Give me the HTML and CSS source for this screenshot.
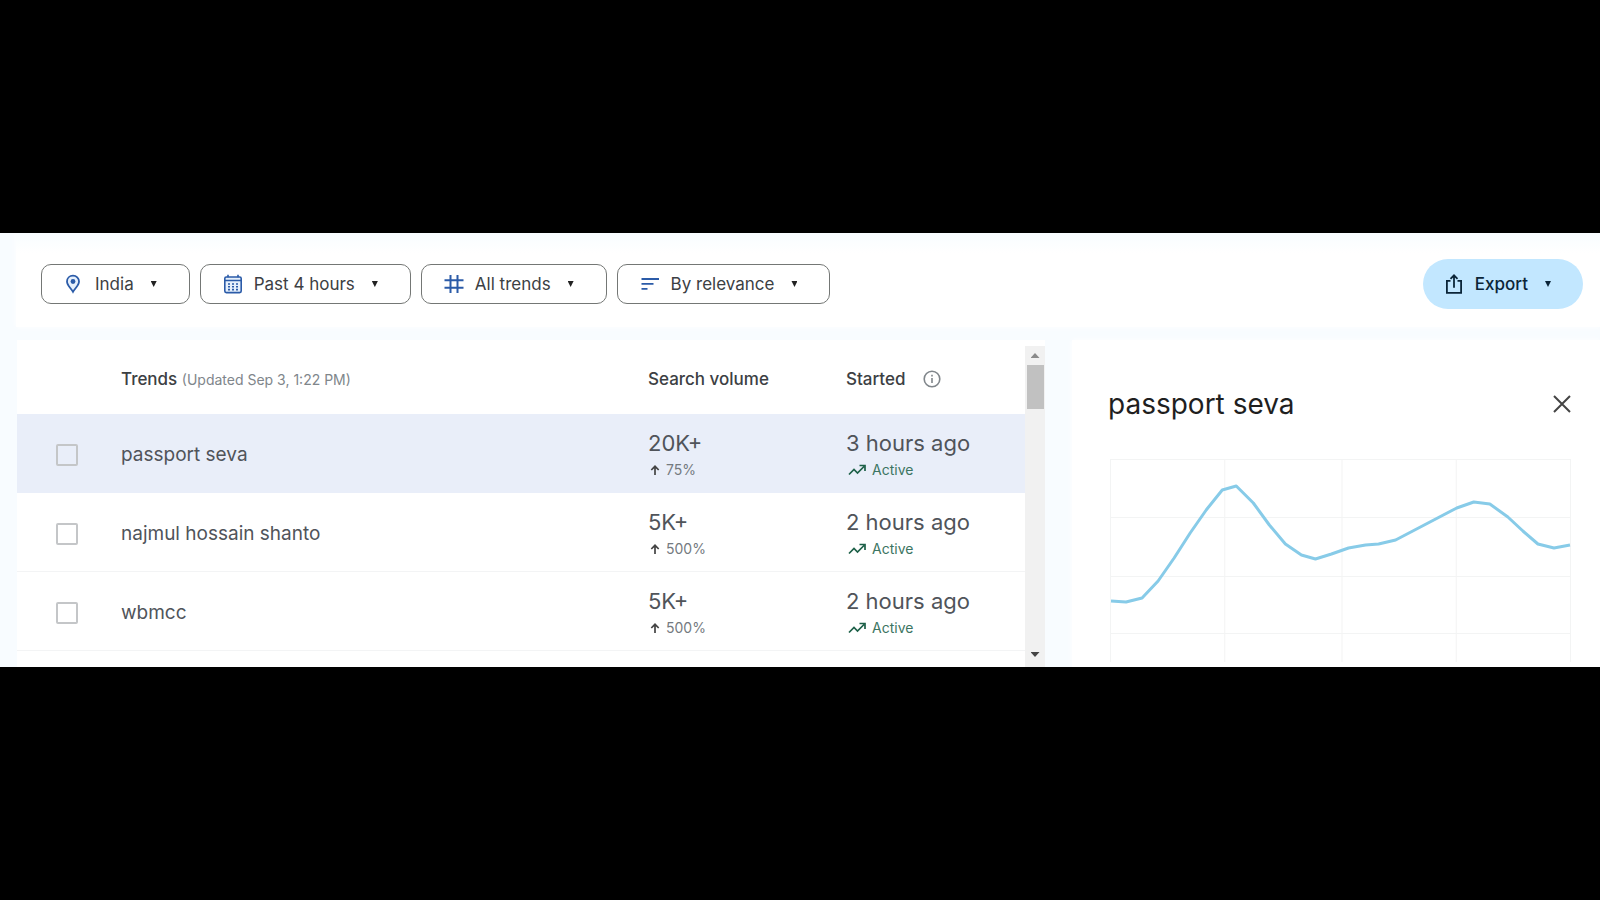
FILE: index.html
```
<!DOCTYPE html>
<html lang="en">
<head>
    <meta charset="UTF-8">
    <meta name="viewport" content="width=device-width, initial-scale=1.0">
    <title>Trending now</title>
    <link rel="stylesheet" href="styles.css">
</head>
<body>
    <main class="app">
        <header class="toolbar">
            <div class="filters">
                <button type="button" class="filter">
                    <svg class="icon" viewBox="0 0 20 20" fill="none" stroke="currentColor" stroke-width="1.8">
                        <path d="M9 1.600c-3.400 0-6 2.500-6 5.900 0 3.800 3.500 6.200 6 10.400 2.500-4.200 6-6.600 6-10.400 0-3.400-2.600-5.900-6-5.900z" fill="#e6f0fc"/>
                        <circle cx="9" cy="7.500" r="2.400" fill="currentColor" stroke="none"/>
                    </svg>
                    <span>India</span>
                    <span class="caret"></span>
                </button>
                <button type="button" class="filter">
                    <svg class="icon" viewBox="0 0 20 20" fill="none" stroke="currentColor" stroke-width="1.6">
                        <rect x="1.800" y="3" width="16.400" height="15.600" rx="1.500" fill="#e6f0fc"/>
                        <path d="M2 6.500h16M5 .8v2.500M15 .8v2.500"/>
                        <path d="M5 10h2m2 0h2m2 0h2M5 12.800h2m2 0h2m2 0h2M5 15.600h2m2 0h2m2 0h2"/>
                    </svg>
                    <span>Past 4 hours</span>
                    <span class="caret"></span>
                </button>
                <button type="button" class="filter">
                    <svg class="icon" viewBox="0 0 20 20" fill="none" stroke="currentColor" stroke-width="2">
                        <path d="M6.500 1v18M13.500 1v18M.5 6.200h19M.5 13.800h19"/>
                    </svg>
                    <span>All trends</span>
                    <span class="caret"></span>
                </button>
                <button type="button" class="filter">
                    <svg class="icon" viewBox="0 0 20 20" fill="none" stroke="currentColor" stroke-width="1.8">
                        <path d="M1.500 5h17.500M1.500 9.900h12M1.500 14.800h6"/>
                    </svg>
                    <span>By relevance</span>
                    <span class="caret"></span>
                </button>
            </div>
            <button type="button" class="export">
                <svg class="icon" viewBox="0 0 20 20" fill="none" stroke="currentColor" stroke-width="1.8">
                    <path d="M6.500 6.800H2.900v12h14.200v-12h-3.600M10 13.800V2M6.500 4.800L10 1.300l3.500 3.500"/>
                </svg>
                <span>Export</span>
                <span class="caret"></span>
            </button>
        </header>

        <div class="content">
            <section class="trends">
                <table>
                    <colgroup>
                        <col class="col-check">
                        <col class="col-name">
                        <col class="col-volume">
                        <col class="col-started">
                    </colgroup>
                    <thead>
                        <tr>
                            <th></th>
                            <th>Trends <span class="updated">(Updated Sep 3, 1:22 PM)</span></th>
                            <th>Search volume</th>
                            <th>
                                <span class="started-head">Started
                                    <svg class="info" viewBox="0 0 18 18" fill="none" stroke="currentColor" stroke-width="1.6">
                                        <circle cx="9" cy="9" r="7.800"/>
                                        <path d="M9 8v5M9 4.800v1.700"/>
                                    </svg>
                                </span>
                            </th>
                        </tr>
                    </thead>
                    <tbody>
                        <tr class="selected">
                            <td><input type="checkbox" aria-label="Select passport seva"></td>
                            <td class="name">passport seva</td>
                            <td>
                                <div class="value">20K+</div>
                                <div class="detail"><svg class="up" viewBox="0 0 10 10"><path d="M5 10V1.500M1.300 5L5 1.300 8.700 5"/></svg>75%</div>
                            </td>
                            <td>
                                <div class="value">3 hours ago</div>
                                <div class="detail active"><svg class="trend" viewBox="0 0 18 12"><path d="M1 10.500l5-5 3.500 3.500L16 2.500M11.500 1.500H17V7"/></svg>Active</div>
                            </td>
                        </tr>
                        <tr>
                            <td><input type="checkbox" aria-label="Select najmul hossain shanto"></td>
                            <td class="name">najmul hossain shanto</td>
                            <td>
                                <div class="value">5K+</div>
                                <div class="detail"><svg class="up" viewBox="0 0 10 10"><path d="M5 10V1.500M1.300 5L5 1.300 8.700 5"/></svg>500%</div>
                            </td>
                            <td>
                                <div class="value">2 hours ago</div>
                                <div class="detail active"><svg class="trend" viewBox="0 0 18 12"><path d="M1 10.500l5-5 3.500 3.500L16 2.500M11.500 1.500H17V7"/></svg>Active</div>
                            </td>
                        </tr>
                        <tr>
                            <td><input type="checkbox" aria-label="Select wbmcc"></td>
                            <td class="name">wbmcc</td>
                            <td>
                                <div class="value">5K+</div>
                                <div class="detail"><svg class="up" viewBox="0 0 10 10"><path d="M5 10V1.500M1.300 5L5 1.300 8.700 5"/></svg>500%</div>
                            </td>
                            <td>
                                <div class="value">2 hours ago</div>
                                <div class="detail active"><svg class="trend" viewBox="0 0 18 12"><path d="M1 10.500l5-5 3.500 3.500L16 2.500M11.500 1.500H17V7"/></svg>Active</div>
                            </td>
                        </tr>
                    </tbody>
                </table>
                <div class="scrollbar">
                    <span class="scroll-up"></span>
                    <span class="scroll-thumb"></span>
                    <span class="scroll-down"></span>
                </div>
            </section>

            <aside class="details">
                <div class="details-head">
                    <h2>passport seva</h2>
                    <button type="button" class="close" aria-label="Close">
                        <svg viewBox="0 0 18 18"><path d="M1 1l16 16M17 1L1 17"/></svg>
                    </button>
                </div>
                <svg class="chart" viewBox="0 0 460 208" preserveAspectRatio="none">
                    <path class="grid" d="M0 .5H460M0 58.500H460M0 117.500H460M0 174.500H460M.5 0V203M114.500 0V203M231.500 0V203M345.500 0V203M459.500 0V203"/>
                    <polyline class="line" points="1,142 16,143 32,139 48,122 64,99 80,74 96,51 112,31 126,27 143,44 159,66 175,85 191,96 205,100 221,95 238,89 255,86 268,85 285,81 346,49 363,43 379,45 397,58 412,72 427,85 443,89 459,86"/>
                </svg>
            </aside>
        </div>
    </main>
</body>
</html>
```
FILE: styles.css
```
* {
    box-sizing: border-box;
}

body {
    margin: 0;
    min-height: 100vh;
    display: flex;
    flex-direction: column;
    justify-content: center;
    background-color: #000;
    color: #3c4043;
    font-family: Inter, "Liberation Sans", sans-serif;
    font-size: 17px;
}

button {
    font: inherit;
    cursor: pointer;
}

.app {
    background-color: #f8fcff;
    overflow: hidden;
}

/* Toolbar */
.toolbar {
    display: flex;
    justify-content: space-between;
    align-items: center;
    margin: 0 0 13px 16px;
    padding: 26px 17px 18px 25px;
    background: linear-gradient(#f8fdff, #fff 20px);
    box-shadow: 0 0 6px #fff;
}

.filters {
    display: flex;
    gap: 10px;
}

.filter {
    display: flex;
    align-items: center;
    height: 40px;
    padding: 0 32px 0 22px;
    border: 1px solid #747775;
    border-radius: 10px;
    background-color: #fff;
    color: #3c4043;
}

.filter .icon {
    color: #2b5ba8;
}

.icon {
    width: 20px;
    height: 20px;
    margin-right: 11px;
}

.caret {
    width: 6px;
    height: 6px;
    margin-left: 17px;
    background-color: #222;
    clip-path: polygon(0 0, 100% 0, 50% 100%);
}

.export {
    display: flex;
    align-items: center;
    height: 50px;
    padding: 0 32px 0 21px;
    border: none;
    border-radius: 25px;
    background-color: #c2e7ff;
    color: #0b2538;
    font-weight: 500;
}

.export .caret {
    background-color: #0b2538;
}

.content {
    display: grid;
    grid-template-columns: 1028fr 528fr;
    gap: 27px;
    padding-left: 17px;
}

/* Trends table */
.trends {
    display: flex;
    height: 327px;
    background-color: #fff;
    overflow: hidden;
}

table {
    flex: 1;
    table-layout: fixed;
    border-spacing: 0;
    align-self: flex-start;
}

.col-check {
    width: 104px;
}

.col-volume {
    width: 198px;
}

.col-started {
    width: 179px;
}

th {
    height: 74px;
    padding: 4px 0 0;
    font-weight: 500;
    text-align: left;
}

.updated {
    color: #80868b;
    font-size: 14px;
    font-weight: 400;
}

.started-head {
    display: flex;
    align-items: center;
    gap: 18px;
}

.info {
    width: 18px;
    height: 18px;
    color: #80868b;
}

td {
    height: 79px;
    padding: 3px 0 0;
    border-bottom: 1px solid #f3f4f5;
}

.selected td {
    background-color: #e9eef9;
    border-bottom-color: #e9eef9;
}

input[type="checkbox"] {
    appearance: none;
    display: block;
    width: 22px;
    height: 22px;
    margin: 0 0 0 39px;
    border: 2px solid #c4c6c8;
    border-radius: 2px;
}

.name {
    font-size: 19px;
    color: #50545a;
}

.value {
    font-size: 22px;
    line-height: 30px;
    color: #50545a;
}

.detail {
    display: flex;
    align-items: center;
    font-size: 14px;
    line-height: 24px;
    color: #747a80;
}

.detail svg {
    fill: none;
    stroke: currentColor;
    stroke-width: 1.7;
}

.up {
    width: 10px;
    height: 10px;
    margin: 0 6px 0 2px;
    color: #444;
}

.active {
    color: #3c7562;
}

.trend {
    width: 18px;
    height: 12px;
    margin: 0 6px 0 2px;
    color: #1d6048;
}

.scrollbar {
    display: flex;
    flex-direction: column;
    align-items: center;
    width: 20px;
    margin-top: 6px;
    padding: 7px 0 10px;
    background-color: #f1f1f1;
}

.scroll-up,
.scroll-down {
    width: 9px;
    height: 5px;
    background-color: #8a8a8a;
    clip-path: polygon(50% 0, 100% 100%, 0 100%);
}

.scroll-down {
    margin-top: auto;
    background-color: #444;
    clip-path: polygon(0 0, 100% 0, 50% 100%);
}

.scroll-thumb {
    width: 17px;
    height: 44px;
    margin-top: 7px;
    background-color: #c1c1c1;
}

/* Details panel */
.details {
    padding: 44px 29px 0 36px;
    background-color: #fff;
    box-shadow: 0 0 6px #fff;
}

.details-head {
    display: flex;
    justify-content: space-between;
    align-items: center;
    margin-bottom: 35px;
}

h2 {
    margin: 0;
    font-size: 28px;
    font-weight: 400;
    line-height: 40px;
    color: #1f1f1f;
}

.close {
    display: flex;
    padding: 0;
    border: none;
    background: none;
}

.close svg {
    width: 18px;
    height: 18px;
    stroke: #444;
    stroke-width: 2;
}

.chart {
    display: block;
    width: 100%;
    height: 208px;
    padding-left: 2px;
}

.grid {
    fill: none;
    stroke: #f3f4f4;
}

.line {
    fill: none;
    stroke: #87cbe8;
    stroke-width: 3;
    stroke-linejoin: round;
}
```
